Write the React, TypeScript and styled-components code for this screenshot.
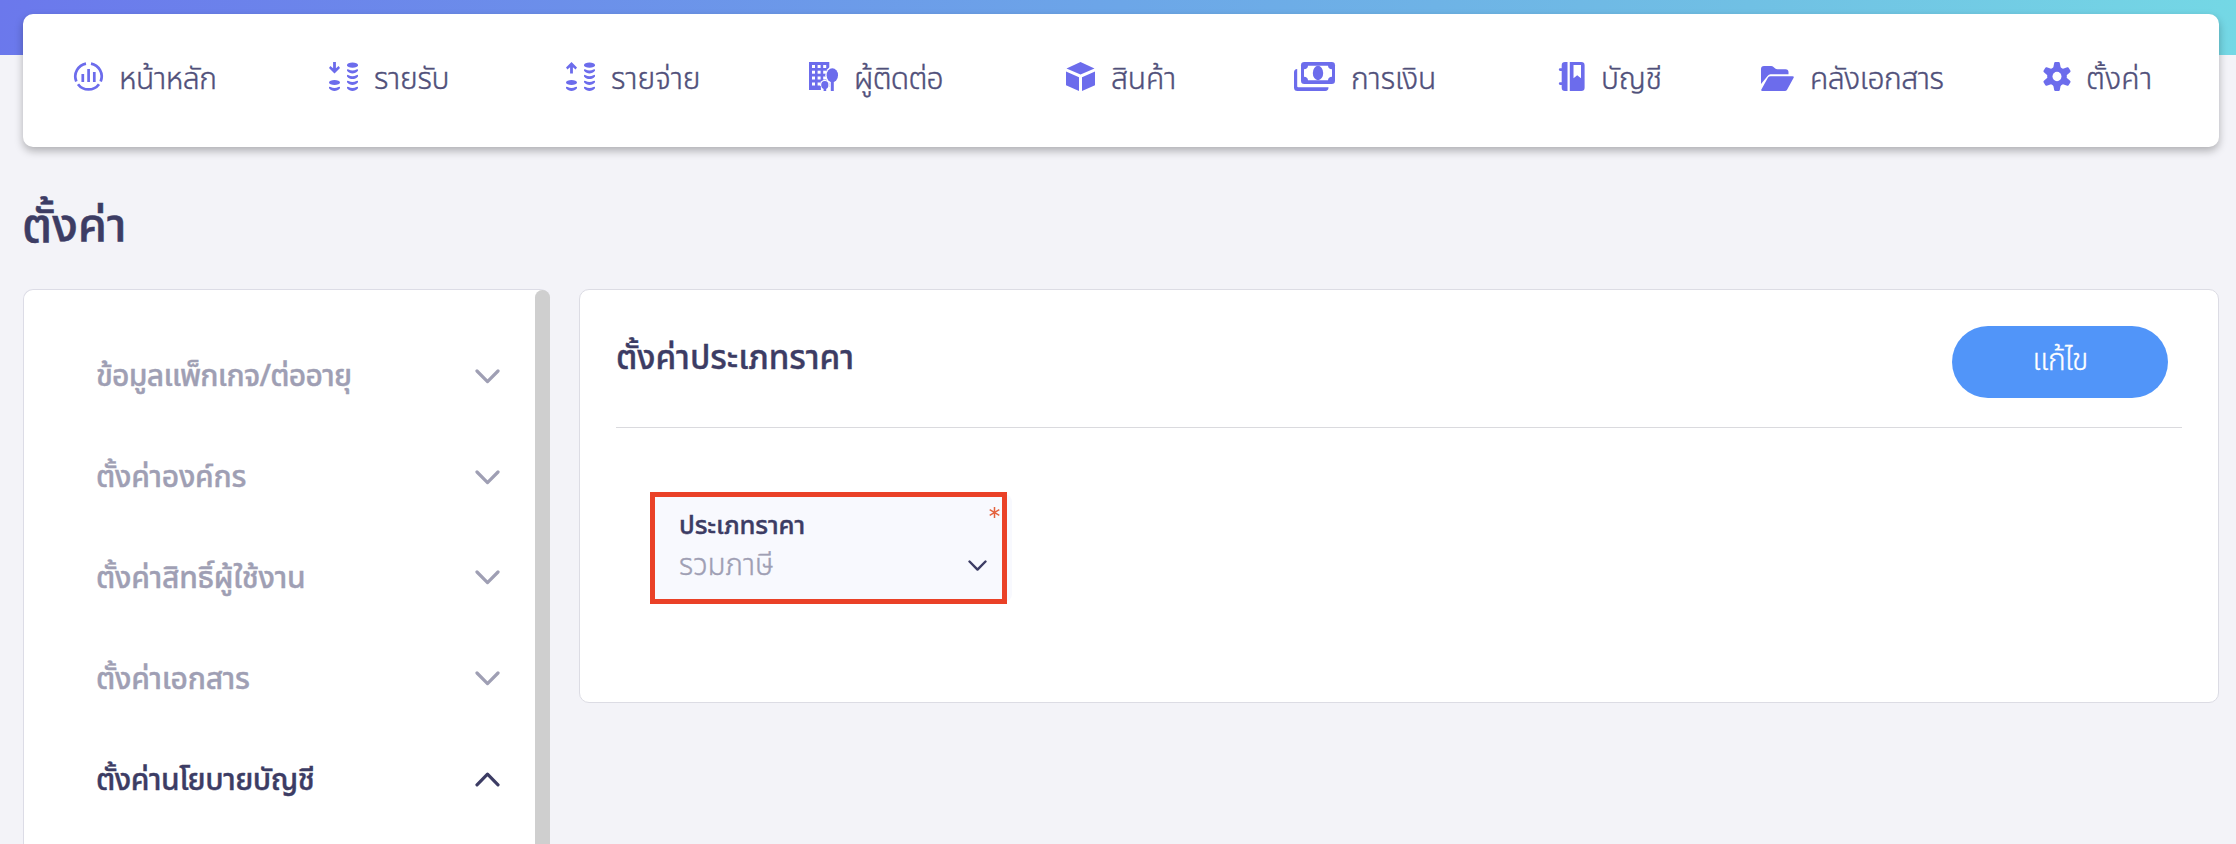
import React, { ReactNode } from "react";
import styled, { createGlobalStyle } from "styled-components";

const INK = "#3c3c64";
const MUTED = "#9f9fb4";
const PURPLE = "#6c6cec";

const GlobalStyle = createGlobalStyle`
  *, *::before, *::after { box-sizing: border-box; }
  body {
    margin: 0;
    background: #f3f3f8;
    color: ${INK};
    font-family: "Noto Sans Thai", "Noto Sans", sans-serif;
  }
`;

const Page = styled.div`
  height: 844px;
  overflow: hidden;
  display: flex;
  flex-direction: column;
  background:
    linear-gradient(97deg, #6b78ec 0%, #6ca6e8 50%, #70c0e4 78%, #74d8e5 100%) top / 100% 55px no-repeat,
    #f3f3f8;
`;

const NavCard = styled.nav`
  flex: none;
  height: 133px;
  margin: 14px 17px 0 23px;
  padding: 43px 0 0 51px;
  display: flex;
  align-items: flex-start;
  background: #fff;
  border-radius: 10px;
  box-shadow: 0 4px 8px rgba(0, 0, 0, 0.28);
`;

const NavItem = styled.a<{ $width: number }>`
  flex: none;
  width: ${p => p.$width}px;
  display: flex;
  align-items: flex-start;
  gap: 16px;
  color: #50507a;
`;

const NavIcon = styled.span<{ $width: number }>`
  flex: none;
  width: ${p => p.$width}px;
  height: 29px;
  margin-top: 5px;
  color: ${PURPLE};
  svg { display: block; width: 100%; height: 100%; overflow: visible; }
`;

const NavLabel = styled.span<{ $track: number }>`
  font-size: 30px;
  font-weight: 300;
  -webkit-text-stroke: 0.4px currentColor;
  line-height: 46px;
  letter-spacing: ${p => p.$track}px;
  white-space: nowrap;
`;

const PageTitle = styled.h1`
  flex: none;
  margin: 43px 0 0 22px;
  height: 99px;
  font-size: 47px;
  font-weight: 500;
  -webkit-text-stroke: 0.5px currentColor;
  line-height: 76px;
`;

const Columns = styled.main`
  flex: 1;
  min-height: 0;
  display: flex;
  align-items: flex-start;
  gap: 29px;
  padding: 0 17px 0 23px;
`;

const Sidebar = styled.aside`
  flex: none;
  width: 527px;
  height: 600px;
  display: flex;
  background: #fff;
  border: 1px solid #dcdce6;
  border-right: 0;
  border-radius: 10px;
`;

const Menu = styled.ul`
  flex: 1;
  margin: 0;
  padding: 37px 35px 0 72px;
  list-style: none;
`;

const MenuItem = styled.li<{ $active?: boolean }>`
  height: 100.8px;
  display: flex;
  justify-content: space-between;
  align-items: center;
  color: ${p => (p.$active ? INK : MUTED)};
  svg { margin-bottom: 2px; }
`;

const MenuLabel = styled.span<{ $track: number }>`
  font-size: 30px;
  font-weight: 500;
  -webkit-text-stroke: 0.4px currentColor;
  line-height: 50px;
  letter-spacing: ${p => p.$track}px;
  white-space: nowrap;
`;

const ScrollThumb = styled.div`
  width: 15px;
  border-radius: 8px;
  background: #cfcfcf;
`;

const Panel = styled.section`
  flex: 1;
  height: 414px;
  padding: 36px 36px 0;
  background: #fff;
  border: 1px solid #dcdce4;
  border-radius: 10px;
`;

const PanelHeader = styled.header`
  height: 102px;
  padding-right: 14px;
  display: flex;
  justify-content: space-between;
  align-items: flex-start;
  border-bottom: 1px solid #dadade;
`;

const PanelTitle = styled.h2`
  margin: 8px 0 0;
  font-size: 33.2px;
  font-weight: 500;
  -webkit-text-stroke: 0.4px currentColor;
  line-height: 50px;
`;

const EditButton = styled.button`
  width: 216px;
  height: 72px;
  padding: 0 0 2px;
  border: 0;
  border-radius: 36px;
  background: #5195f9;
  color: #fff;
  font: 300 30px/50px "Noto Sans Thai", sans-serif;
  letter-spacing: -0.7px;
  -webkit-text-stroke: 0.3px currentColor;
`;

const Field = styled.div`
  position: relative;
  width: 359px;
  height: 108px;
  margin: 66px 0 0 37px;
  padding: 13px 22px 0 26px;
  background: #f8f9fe;
  border-radius: 8px;
`;

const Highlight = styled.div`
  position: absolute;
  left: -3px;
  top: -2px;
  width: 357px;
  height: 112px;
  border: 5px solid #ea4127;
`;

const Required = styled.svg`
  position: absolute;
  top: 13px;
  right: 12px;
  width: 11px;
  height: 11px;
`;

const FieldLabel = styled.div`
  font-size: 25.7px;
  font-weight: 500;
  -webkit-text-stroke: 0.4px currentColor;
  letter-spacing: -0.1px;
  line-height: 40px;
`;

const FieldValue = styled.div`
  display: flex;
  justify-content: space-between;
  align-items: center;
  padding-right: 3px;
  color: ${MUTED};
  font-size: 29.5px;
  font-weight: 300;
  -webkit-text-stroke: 0.4px currentColor;
  line-height: 39px;
  svg { margin-bottom: 1px; }
`;

const Chevron = ({ up, width = 25, color = "currentColor" }: { up?: boolean; width?: number; color?: string }) => (
  <svg width={width} height={width * 0.6} viewBox="0 0 25 15" fill="none" stroke={color} strokeWidth="3.2" strokeLinecap="round" strokeLinejoin="round">
    <path d={up ? "M2 12.8 12.5 2.200 23 12.800" : "M2 2 12.5 12.600 23 2"} />
  </svg>
);

const HomeIcon = (
  <svg viewBox="0 0 29 29" fill="none" stroke="currentColor" strokeWidth="2.7">
    <path d="M12 1.6A13.100 13.100 0 0 0 2.300 19.400M17 1.600a13.100 13.100 0 0 1 9.700 17.800M4 22.200a13.100 13.100 0 0 0 21 0" />
    <path d="M8.800 12v8M14.600 7v13M20.300 10v10" />
  </svg>
);

const CoinEdge = ({ x, y }: { x: number; y: number }) => (
  <path transform={`translate(${x} ${y})`} d="M0 .4Q.6-.4 1.600.3 5.500 2.400 9.400.3 10.400-.4 11 .4V1.500C9.500 3.500 7.500 4.200 5.500 4.200S1.500 3.500 0 1.500Z" />
);

const coins = (up: boolean) => (
  <svg viewBox="0 0 29 29" fill="currentColor">
    <path transform={up ? "matrix(1 0 0 -1 0 11.500)" : undefined} d="M4.100 0h2.800v6.300L9.600 4 11 6 5.500 11.500 0 6 1.400 4l2.700 2.300Z" />
    <ellipse cx="5.500" cy="20.500" rx="5.500" ry="2.600" />
    <CoinEdge x={0} y={24.7} />
    <ellipse cx="23.500" cy="3.200" rx="5.500" ry="2.600" />
    {[7.2, 12.9, 18.7, 24.7].map(y => <CoinEdge key={y} x={18} y={y} />)}
  </svg>
);

const ContactIcon = (
  <svg viewBox="0 0 29 29" fill="currentColor">
    <path d="M0 0h20.300v28H0Z" />
    <g fill="#fff">
      {[3, 8.7, 14.5, 20.5].map(y => [3, 8.6, 14.2].map(x => <rect key={`${x}-${y}`} x={x} y={y} width="3" height="3" />))}
      <ellipse cx="23.300" cy="13.300" rx="7" ry="8.500" />
      <ellipse cx="15.800" cy="23" rx="4.800" ry="5.200" />
      <path d="M11.500 25h10.500v4H11.500Z" />
    </g>
    <path d="M0 24h11.800v4H0Z" />
    <ellipse cx="23.300" cy="13.300" rx="5.700" ry="7" />
    <ellipse cx="15.800" cy="23" rx="3.600" ry="4" />
    <path d="M21.800 18h3v11h-3ZM14.600 25h2.600v4h-2.600Z" />
  </svg>
);

const ProductIcon = (
  <svg viewBox="0 0 29 29" fill="currentColor">
    <path d="M14.500 0 28.500 6.500 14.500 12.500.5 6.500ZM0 9.500 13 15.300V29L0 23.200ZM29 9.500 16 15.300V29l13-5.800Z" />
  </svg>
);

const FinanceIcon = (
  <svg viewBox="0 0 41 29" fill="currentColor">
    <path d="M3.200 7v17.200q0 1 1 1H34.500q0 3.800-3.300 3.800H3.500Q0 29 0 25.500V10.500Q0 7 3.200 7Z" />
    <rect x="7" width="34" height="22" rx="3.300" />
    <path fill="#fff" d="M14 3.800h20q.2 3.200 4 3.500v7.400q-3.800.3-4 3.500H14q-.2-3.200-4-3.500V7.300q3.800-.3 4-3.500Z" />
    <ellipse cx="24" cy="11" rx="5.200" ry="7.200" />
  </svg>
);

const AccountIcon = (
  <svg viewBox="0 0 26 29" fill="currentColor">
    <path d="M8.500 0v29H6q-3.300 0-3.300-3.300V23H1.200a1.200 1.200 0 0 1 0-2.800h1.500V9H1.200a1.200 1.200 0 0 1 0-2.800h1.500V3.300Q2.700 0 6 0Z" />
    <path fillRule="evenodd" d="M10.800 0h11.400Q25.600 0 25.600 3.300v22.400q0 3.300-3.400 3.300H10.800ZM14.500 3v13.200l3.700-3 3.800 3V3Z" />
  </svg>
);

const FolderIcon = (
  <svg viewBox="0 0 33 29" fill="currentColor">
    <path d="M0 22V7q0-3 3-3h7.200q1.200 0 2 .8l2 1.700q.9.800 2.200.8H24.500q3 0 3 3v2H9.500q-1.800 0-2.700 1.500Z" />
    <path d="M9.500 14.200H31.500q2 0 1 1.800l-6.300 11.500Q25.400 29 23.800 29H1.500q-2 0-1-1.800L7 15.500q.8-1.300 2.500-1.300Z" />
  </svg>
);

const SettingsIcon = (
  <svg viewBox="0 0 26 29" fill="currentColor">
    <circle cx="13" cy="14.500" r="9.800" />
    {[0, 60, 120, 180, 240, 300].map(a => (
      <path key={a} transform={`rotate(${a} 13 14.500)`} d="M9 7 10.200 1Q10.400 0 11.200 0h3.600q.8 0 1 1L17 7Z" />
    ))}
    <ellipse cx="13" cy="14.500" rx="4.500" ry="4.700" fill="#fff" />
  </svg>
);

interface Entry { label: string; width: number; iconWidth: number; track: number; icon: ReactNode }

const navEntries: Entry[] = [
  { label: "หน้าหลัก", width: 255, iconWidth: 29, track: -0.4, icon: HomeIcon },
  { label: "รายรับ", width: 237, iconWidth: 29, track: -0.3, icon: coins(false) },
  { label: "รายจ่าย", width: 243, iconWidth: 29, track: -0.1, icon: coins(true) },
  { label: "ผู้ติดต่อ", width: 257, iconWidth: 29, track: -0.7, icon: ContactIcon },
  { label: "สินค้า", width: 228, iconWidth: 29, track: -0.2, icon: ProductIcon },
  { label: "การเงิน", width: 265, iconWidth: 41, track: -0.1, icon: FinanceIcon },
  { label: "บัญชี", width: 202, iconWidth: 26, track: -0.2, icon: AccountIcon },
  { label: "คลังเอกสาร", width: 283, iconWidth: 33, track: -0.45, icon: FolderIcon },
  { label: "ตั้งค่า", width: 120, iconWidth: 26, track: 0.3, icon: SettingsIcon },
];

const menuEntries = [
  { label: "ข้อมูลแพ็กเกจ/ต่ออายุ", track: -0.7 },
  { label: "ตั้งค่าองค์กร", track: -0.25 },
  { label: "ตั้งค่าสิทธิ์ผู้ใช้งาน", track: -0.2 },
  { label: "ตั้งค่าเอกสาร", track: -0.25 },
  { label: "ตั้งค่านโยบายบัญชี", track: -0.45, active: true },
];

export default function App() {
  return (
    <>
      <GlobalStyle />
      <Page>
        <NavCard>
          {navEntries.map(e => (
            <NavItem key={e.label} $width={e.width}>
              <NavIcon $width={e.iconWidth}>{e.icon}</NavIcon>
              <NavLabel $track={e.track}>{e.label}</NavLabel>
            </NavItem>
          ))}
        </NavCard>
        <PageTitle>ตั้งค่า</PageTitle>
        <Columns>
          <Sidebar>
            <Menu>
              {menuEntries.map(e => (
                <MenuItem key={e.label} $active={e.active}>
                  <MenuLabel $track={e.track}>{e.label}</MenuLabel>
                  <Chevron up={e.active} />
                </MenuItem>
              ))}
            </Menu>
            <ScrollThumb />
          </Sidebar>
          <Panel>
            <PanelHeader>
              <PanelTitle>ตั้งค่าประเภทราคา</PanelTitle>
              <EditButton>แก้ไข</EditButton>
            </PanelHeader>
            <Field>
              <FieldLabel>ประเภทราคา</FieldLabel>
              <FieldValue>
                รวมภาษี
                <Chevron width={19} color={INK} />
              </FieldValue>
              <Required viewBox="0 0 11 11" stroke="#e4633f" strokeWidth="1.5">
                <path d="M5.500 0v11M.7 2.700l9.600 5.600M.7 8.300l9.600-5.600" />
              </Required>
              <Highlight />
            </Field>
          </Panel>
        </Columns>
      </Page>
    </>
  );
}
